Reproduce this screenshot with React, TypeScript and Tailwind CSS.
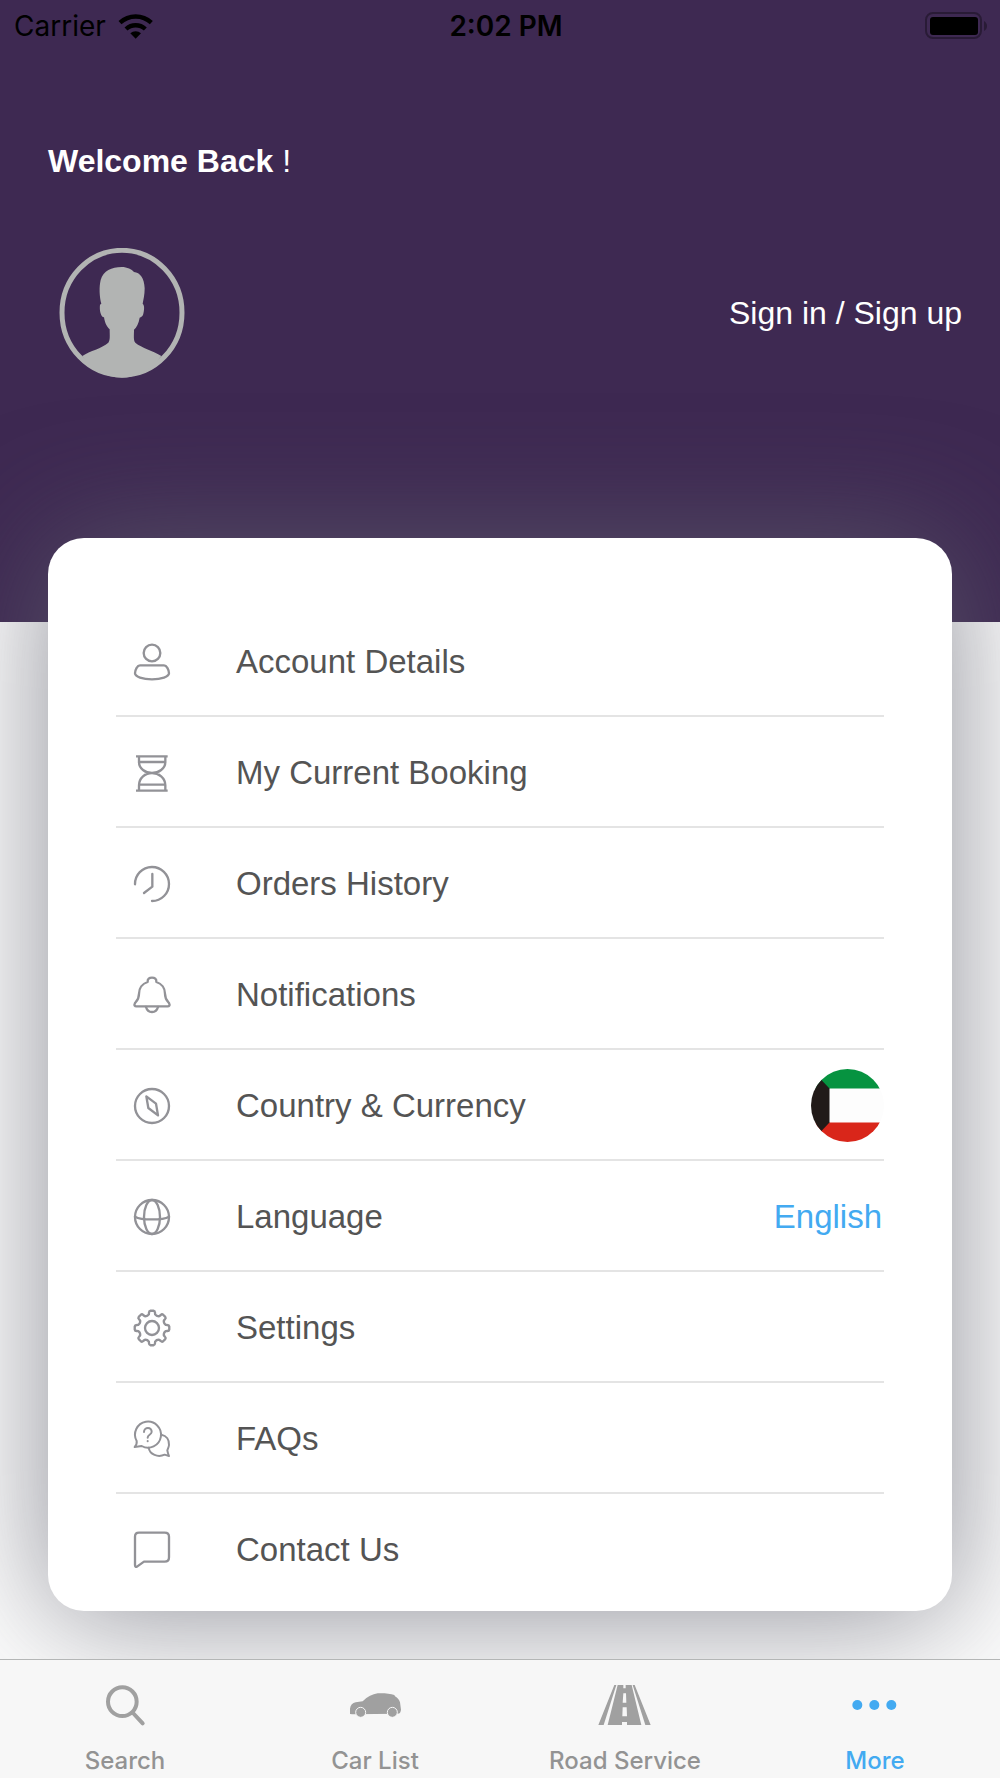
import type { ReactNode } from "react";

// --- menu icons: all drawn on a 120-unit grid, one stroke weight ---

function LineIcon({ children }: { children: ReactNode }) {
  return (
    <svg
      viewBox="0 0 120 120"
      className="size-10 shrink-0"
      fill="none"
      stroke="#929297"
      strokeWidth="7"
      strokeLinecap="round"
      strokeLinejoin="round"
      aria-hidden="true"
    >
      {children}
    </svg>
  );
}

// eight rounded teeth, with the valleys between them pulled towards the hub
function gearPath(): string {
  const pt = (r: number, deg: number) => {
    const a = (deg * Math.PI) / 180;
    return `${(60 + r * Math.cos(a)).toFixed(1)} ${(60 + r * Math.sin(a)).toFixed(1)}`;
  };
  let d = `M${pt(42, -13)}`;
  for (let i = 0; i < 8; i++) {
    const a = i * 45;
    d += `L${pt(47, a - 11)}Q${pt(52, a - 10)} ${pt(52, a - 5)}L${pt(52, a + 5)}`;
    d += `Q${pt(52, a + 10)} ${pt(47, a + 11)}L${pt(42, a + 13)}Q${pt(37, a + 22.5)} ${pt(42, a + 32)}`;
  }
  return `${d}Z`;
}

const GEAR = gearPath();

type MenuItem = { label: string; icon: ReactNode; extra?: ReactNode };

function KuwaitFlag() {
  return (
    <svg viewBox="0 0 73 73" className="size-[73px]" role="img" aria-label="Kuwait">
      <clipPath id="flag-round">
        <circle cx="36.5" cy="36.5" r="36.5" />
      </clipPath>
      <g clipPath="url(#flag-round)">
        <rect width="73" height="73" fill="#fdfdfd" />
        <rect width="73" height="19.5" fill="#069340" />
        <rect y="53.5" width="73" height="19.5" fill="#d9261a" />
        <path d="M0 0L18.5 19.5V53.5L0 73Z" fill="#211a18" />
      </g>
    </svg>
  );
}

const MENU: MenuItem[] = [
  {
    label: "Account Details",
    icon: (
      <>
        <circle cx="60" cy="33" r="25" />
        <path d="M24 70H96C104 70 111 84 111 94C111 104 88 112 60 112S9 104 9 94C9 84 16 70 24 70Z" />
      </>
    ),
  },
  {
    label: "My Current Booking",
    icon: (
      <path
        strokeLinecap="butt"
        d="M12 10H107M20 27H101M12 113H107M20 95H101M21 10V27C21 47 40 60 60 60S100 47 100 27V10M21 113V97C21 75 40 60 60 60S100 75 100 97V113"
      />
    ),
  },
  {
    label: "Orders History",
    icon: <path d="M9 61A51 51 0 1 1 60 111M61 30V68L36 87" />,
  },
  {
    label: "Notifications",
    icon: (
      <>
        <path d="M47 21C46 12 52 8 60 8S74 12 73 21C89 26 99 40 99 56C99 72 104 76 111 84C115 92 111 94 107 94H13C9 94 5 92 9 84C16 76 21 72 21 56C21 40 31 26 47 21Z" />
        <path d="M42 96C45 107 52 111 60 111S75 107 78 96" />
      </>
    ),
  },
  {
    label: "Country & Currency",
    icon: (
      <>
        <circle cx="60" cy="60" r="51" />
        <path d="M43 31L72 53L78 88L49 66Z" />
      </>
    ),
    extra: <KuwaitFlag />,
  },
  {
    label: "Language",
    icon: (
      <>
        <circle cx="60" cy="60" r="51" />
        <ellipse cx="60" cy="60" rx="24" ry="51" />
        <path d="M9 59C28 70 92 70 111 59" />
      </>
    ),
    extra: <span className="pr-0.5 text-[33px] text-[#43aaf1]">English</span>,
  },
  {
    label: "Settings",
    icon: (
      <>
        <circle cx="60" cy="60" r="21" />
        <path d={GEAR} />
      </>
    ),
  },
  {
    label: "FAQs",
    icon: (
      <g strokeWidth="6">
        <path d="M14 66A39 39 0 1 1 29 81L8 84C13 79 15 73 14 66Z" />
        <path d="M88 47C104 50 112 63 111 78C110 86 107 90 106 94C107 101 109 106 111 111L98 107C78 116 53 107 50 86" />
        <path d="M36 39C36 23 60 23 59 39C58 48 47 47 47 56M47 66V67" />
      </g>
    ),
  },
  {
    label: "Contact Us",
    icon: <path d="M9 20Q9 8 21 8H98Q111 8 111 20V82Q111 95 98 95H36L15 110Q9 112 9 105Z" />,
  },
];

// --- tab bar ---

type Tab = { label: string; icon: ReactNode; active?: boolean };

const TABS: Tab[] = [
  {
    label: "Search",
    icon: (
      <g fill="none" stroke="currentColor" strokeWidth="12" strokeLinecap="round">
        <circle cx="76" cy="62" r="43" />
        <path d="M108 96L137 127" />
      </g>
    ),
  },
  {
    label: "Car List",
    icon: (
      <>
        <path
          fill="currentColor"
          d="M9 99V83C10 72 17 66 26 64L47 61C62 47 76 39 92 37C110 36 130 38 142 42L144 46C152 51 157 56 159 64L162 86C161 93 159 98 152 98L16 100Z"
        />
        <g fill="currentColor" stroke="#f7f7f7" strokeWidth="3">
          <circle cx="41" cy="94" r="15" />
          <circle cx="136" cy="94" r="15" />
        </g>
      </>
    ),
  },
  {
    label: "Road Service",
    icon: (
      <>
        <path
          fill="currentColor"
          d="M52 12H58L20 132H4ZM107 12H113L161 132H145ZM62 12H104L133 132H32Z"
        />
        <path fill="#f7f7f7" d="M79 12H86V22H79ZM79 37H87L88 65H77ZM77 79H89L90 106H76ZM75 123H90V132H75Z" />
      </>
    ),
  },
  {
    label: "More",
    active: true,
    icon: (
      <g fill="currentColor">
        <circle cx="31" cy="72" r="15" />
        <circle cx="82" cy="72" r="15" />
        <circle cx="133" cy="72" r="15" />
      </g>
    ),
  },
];

function StatusBar() {
  return (
    <div className="grid h-[52px] grid-cols-3 items-center px-3 font-['Inter',sans-serif] text-[28px] leading-8 text-black">
      <div className="flex items-center gap-3 pl-0.5">
        <span>Carrier</span>
        <svg viewBox="360 30 108 84" className="h-7 w-9" aria-hidden="true">
          <path d="M413 110L397 94A24 24 0 0 1 429 94Z" />
          <g fill="none" stroke="#000" strokeWidth="13">
            <path d="M366 62A69 69 0 0 1 460 62" />
            <path d="M384 81A43 43 0 0 1 442 81" />
          </g>
        </svg>
      </div>
      <span className="pl-3 text-center font-semibold">2:02 PM</span>
      <svg viewBox="0 0 64 28" className="h-7 w-16 justify-self-end" aria-hidden="true">
        <rect x="2" y="1" width="55" height="25" rx="7" fill="none" stroke="#291b36" strokeWidth="2" />
        <rect x="6" y="5" width="48" height="18" rx="3" />
        <path d="M60 9C64 11 64 17 60 19Z" fill="#291b36" />
      </svg>
    </div>
  );
}

function Avatar() {
  return (
    <svg viewBox="57 54 378 390" className="h-[130px] w-[126px]" role="img" aria-label="Profile">
      <ellipse cx="246" cy="248" rx="180" ry="187" fill="none" stroke="#b2b4b3" strokeWidth="15" />
      <path
        fill="#b2b4b3"
        d="M127 378C150 362 185 356 205 338C211 330 209 318 209 298C200 290 195 280 192 262C182 260 178 240 180 224L184 221C178 200 177 170 182 150C190 122 215 111 245 111C262 111 275 118 282 126C300 127 313 145 314 175C314 195 310 210 308 221C314 225 313 240 309 255C306 262 300 262 299 263C296 280 290 292 282 299C282 318 280 330 286 338C305 354 340 362 364 378C330 425 280 443 246 443C200 443 155 420 127 378Z"
      />
    </svg>
  );
}

export default function App() {
  return (
    <div className="flex min-h-screen flex-col bg-[#fcfcfc] font-['Liberation_Sans',Arial,sans-serif]">
      <header className="bg-[#3e2952] pb-[244px] text-white">
        <StatusBar />
        <h1 className="mt-[89px] px-12 text-[32px] leading-10 font-bold">
          Welcome Back <span className="font-normal">!</span>
        </h1>
        <div className="mt-[67px] flex items-center justify-between pr-[38px] pl-[59px]">
          <Avatar />
          <a href="#sign-in" className="text-[32px] leading-10">
            Sign in / Sign up
          </a>
        </div>
      </header>

      {/* card overlaps the header by its negative margin */}
      <main className="flex-1 px-12 pb-12">
        <ul className="relative -mt-[84px] rounded-[36px] bg-white px-[68px] pt-[68px] pb-2 shadow-[0_4px_124px_rgba(98,100,112,0.72)]">
          {MENU.map((item) => (
            <li key={item.label} className="border-b-2 border-[#e4e4e4] last:border-b-0">
              <button type="button" className="flex h-[109px] w-full items-center pt-0.5 pl-4 text-left">
                <LineIcon>{item.icon}</LineIcon>
                <span className="ml-16 flex-1 text-[33px] text-[#545454]">{item.label}</span>
                {item.extra}
              </button>
            </li>
          ))}
        </ul>
      </main>

      <nav className="relative grid grid-cols-4 border-t border-[#b4b6b6] bg-[#f7f7f7] pt-[21px] pb-px font-['Inter',sans-serif]">
        {TABS.map((tab) => (
          <button
            key={tab.label}
            type="button"
            aria-current={tab.active ? "page" : undefined}
            className={`flex flex-col items-center gap-4 ${tab.active ? "text-[#43aaf1]" : "text-[#a0a0a0]"}`}
          >
            <svg viewBox="0 0 168 144" className="h-12 w-14" aria-hidden="true">
              {tab.icon}
            </svg>
            <span className={`text-2xl leading-8 font-medium ${tab.active ? "" : "text-[#939393]"}`}>
              {tab.label}
            </span>
          </button>
        ))}
      </nav>
    </div>
  );
}
